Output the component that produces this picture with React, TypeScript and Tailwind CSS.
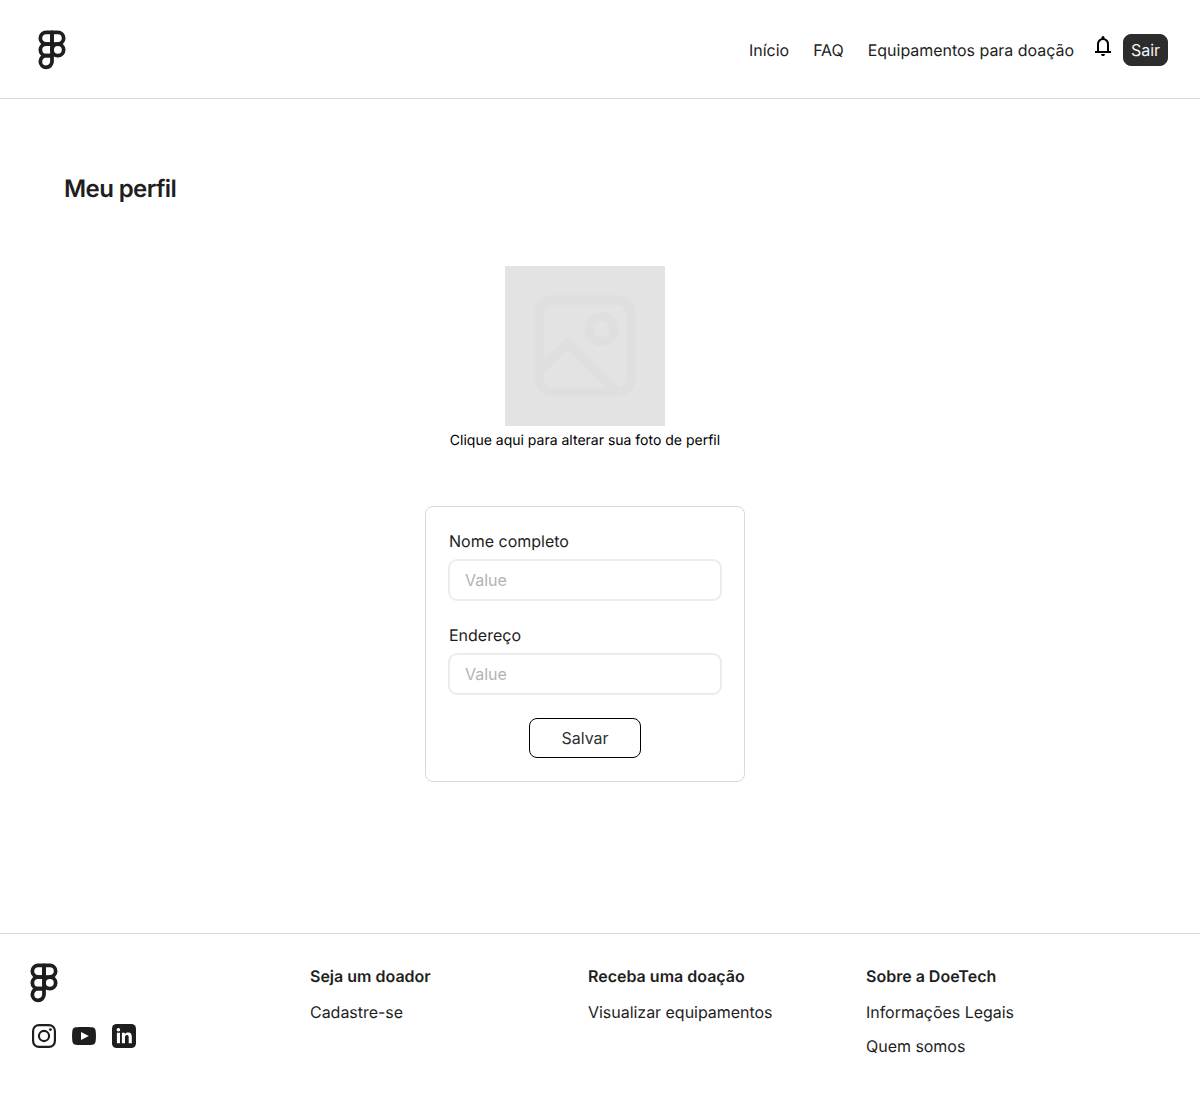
import type { ReactNode } from "react";

function Logo() {
  return (
    <svg width="40" height="40" viewBox="0 0 24 24" fill="none" stroke="#1e1e1e" strokeWidth="2.25" strokeLinejoin="round" overflow="visible">
      <path d="M5 5.5A3.5 3.5 0 0 1 8.5 2H12v7H8.5A3.5 3.5 0 0 1 5 5.5z" />
      <path d="M12 2h3.5a3.5 3.5 0 1 1 0 7H12z" />
      <path d="M12 12.5a3.5 3.5 0 1 1 7 0 3.5 3.5 0 1 1-7 0z" />
      <path d="M5 19.5A3.5 3.5 0 0 1 8.5 16H12v3.5a3.5 3.5 0 1 1-7 0z" />
      <path d="M5 12.5A3.5 3.5 0 0 1 8.5 9H12v7H8.5A3.5 3.5 0 0 1 5 12.5z" />
    </svg>
  );
}

function Bell() {
  return (
    <svg width="24" height="24" viewBox="0 0 24 24" fill="#000">
      <path d="M4 19v-2h2v-7q0-2.075 1.25-3.687T10.5 4.2v-.7q0-.625.438-1.062T12 2t1.063.438T13.5 3.5v.7q2 .5 3.25 2.113T18 10v7h2v2zm8 3q-.825 0-1.412-.587T10 20h4q0 .825-.587 1.413T12 22m-4-5h8v-7q0-1.65-1.175-2.825T12 6T9.175 7.175T8 10z" />
    </svg>
  );
}

function Instagram() {
  return (
    <svg width="24" height="24" viewBox="0 0 24 24" fill="none" stroke="#1e1e1e" strokeWidth="2.16">
      <rect x="1.08" y="1.08" width="21.84" height="21.84" rx="5.9" />
      <circle cx="12" cy="12" r="5.08" />
      <circle cx="18.4" cy="5.6" r="1.44" fill="#1e1e1e" stroke="none" />
    </svg>
  );
}

function Youtube() {
  return (
    <svg width="24" height="24" viewBox="0 0 24 24" fill="#1e1e1e">
      <path fillRule="evenodd" d="M12 3c3.500 0 6.500.1 8.200.3 2 .2 3.100 1.200 3.400 3.300.5 3.500.5 7.300 0 10.800-.3 2.100-1.400 3.100-3.400 3.300-3.400.4-13 .4-16.400 0-2-.2-3.100-1.200-3.400-3.300-.5-3.500-.5-7.300 0-10.800C.7 4.500 1.800 3.500 3.800 3.300 5.500 3.100 8.500 3 12 3zM9 8v8l7.800-4z" />
    </svg>
  );
}

function Linkedin() {
  return (
    <svg width="24" height="24" viewBox="0 0 24 24">
      <rect width="24" height="24" rx="4.6" fill="#1e1e1e" />
      <g fill="#fff">
        <circle cx="6.400" cy="5.700" r="1.800" />
        <path d="M4.900 8.800h3.100V19.200H4.900zM9.900 8.800h3v1.400c.6-1 1.700-1.700 3.100-1.700 3 0 3.800 2 3.800 4.700v6h-3.100v-5.400c0-1.300-.1-2.700-1.800-2.700-1.700 0-1.900 1.300-1.900 2.600v5.500H9.900z" />
      </g>
    </svg>
  );
}

function Placeholder() {
  return (
    <svg width="160" height="160" viewBox="0 0 160 160" fill="none" stroke="#dfdfdf" strokeWidth="9.400" strokeLinejoin="round" className="bg-[#e3e3e3]">
      <rect x="34" y="34" width="92" height="92" rx="14" />
      <circle cx="96.700" cy="63.300" r="12.600" strokeWidth="8.800" />
      <path d="M34.400 104.500 62.500 77 111 125.600" />
    </svg>
  );
}

function Field({ label }: { label: string }) {
  return (
    <label className="flex flex-col gap-[7px]">
      <span className="text-base leading-[22px]">{label}</span>
      <input
        placeholder="Value"
        className="-mx-px h-[42px] rounded-[9px] border-2 border-[#ececec] px-[15px] text-base placeholder:text-[#b3b3b3] outline-none"
      />
    </label>
  );
}

function Column({ title, children }: { title: string; children: ReactNode }) {
  return (
    <div className="flex w-[278px] flex-col gap-3">
      <h2 className="text-base leading-[22px] font-semibold">{title}</h2>
      <div className="mt-0.5 flex flex-col gap-3 leading-[22px] tracking-[-0.03px]">{children}</div>
    </div>
  );
}

export default function App() {
  return (
    <div className="flex h-[1105px] w-[1200px] flex-col bg-white font-['Inter',sans-serif] text-base text-[#1e1e1e] [text-rendering:geometricPrecision]">
      <header className="flex h-[99px] items-center justify-between border-b border-[#d9d9d9] px-8">
        <div className="-mt-px">
          <Logo />
        </div>
        <nav className="mt-px flex items-center">
          <a className="mr-6 tracking-[-0.03px]">Início</a>
          <a className="mr-6 tracking-[-0.03px]">FAQ</a>
          <a className="mr-[17px] tracking-[-0.03px]">Equipamentos para doação</a>
          <span className="-mt-[7px] mr-2">
            <Bell />
          </span>
          <button className="h-8 w-[45px] rounded-lg border border-[#2c2c2c] bg-[#2c2c2c] text-[#f5f5f5]">Sair</button>
        </nav>
      </header>

      <main className="flex h-[834px] flex-col">
        <h1 className="mt-[75px] ml-16 text-2xl leading-[29px] font-semibold tracking-[-0.025em]">Meu perfil</h1>
        <div className="mt-[63px] mr-[30px] flex flex-col items-center">
          <Placeholder />
          <p className="mt-[5px] text-sm leading-5 text-black">Clique aqui para alterar sua foto de perfil</p>
          <form className="mt-[55px] flex h-[276px] w-80 flex-col gap-[23px] rounded-lg border border-[#d9d9d9] px-[23px] pt-[23px]">
            <Field label="Nome completo" />
            <Field label="Endereço" />
            <button type="button" className="h-10 w-28 self-center rounded-lg border border-black text-[#303030]">
              Salvar
            </button>
          </form>
        </div>
      </main>

      <footer className="flex flex-1 border-t border-[#d9d9d9] pt-[31px]">
        <div className="w-[310px]">
          <div className="-mt-[3px] ml-[23.5px]">
            <Logo />
          </div>
          <div className="mt-[22px] ml-8 flex gap-4">
            <Instagram />
            <Youtube />
            <Linkedin />
          </div>
        </div>
        <Column title="Seja um doador">
          <a>Cadastre-se</a>
        </Column>
        <Column title="Receba uma doação">
          <a>Visualizar equipamentos</a>
        </Column>
        <Column title="Sobre a DoeTech">
          <a>Informações Legais</a>
          <a>Quem somos</a>
        </Column>
      </footer>
    </div>
  );
}
